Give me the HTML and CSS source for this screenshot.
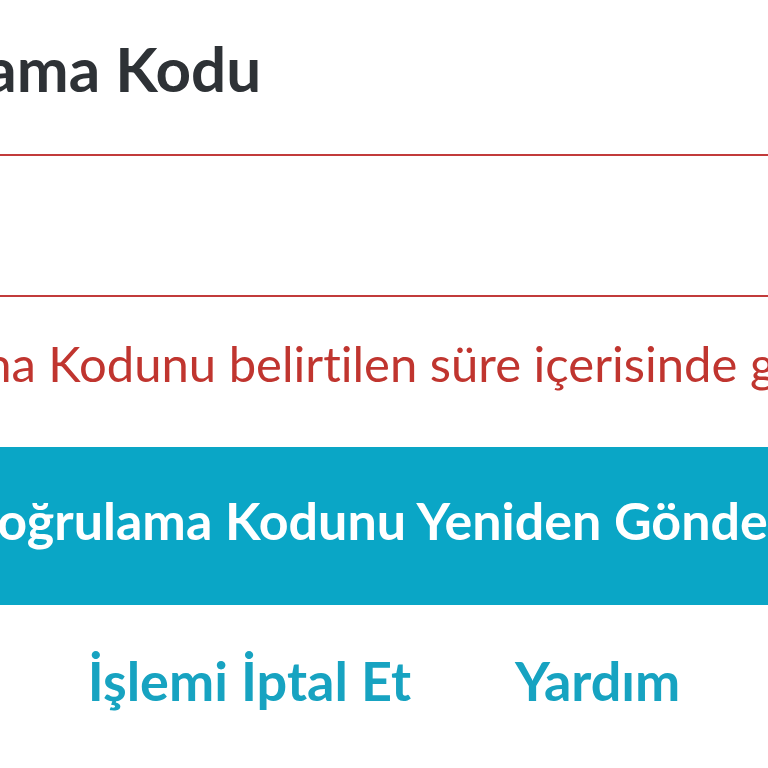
FILE: index.html
```html
<!DOCTYPE html>
<html lang="tr">
<head>
<meta charset="utf-8">
<link rel="stylesheet" href="styles.css">
</head>
<body>
<main class="screen">
  <h1 class="title">Doğrulama Kodu</h1>
  <div class="code-input"></div>
  <p class="error">Doğrulama Kodunu belirtilen süre içerisinde giriniz.</p>
  <button class="resend">Doğrulama Kodunu Yeniden Gönder</button>
  <nav class="links">
    <a class="link">İşlemi İptal Et</a>
    <a class="link">Yardım</a>
  </nav>
</main>
</body>
</html>
```
FILE: styles.css
```css
html, body {
  margin: 0;
  padding: 0;
  background: #ffffff;
  overflow: hidden;
  width: 768px;
  height: 768px;
}
.screen {
  width: 768px;
  font-family: Lato, "Open Sans", sans-serif;
  font-variant-ligatures: none;
}
.title {
  margin: 0 0 0 -203px;
  padding-top: 28px;
  font-size: 62px;
  font-weight: 700;
  line-height: 80px;
  color: #2e3236;
  white-space: nowrap;
}
.code-input {
  margin-top: 46px;
  height: 139px;
  border-top: 2px solid #c23b3b;
  border-bottom: 2px solid #c23b3b;
}
.error {
  margin: 31px 0 0 -200px;
  font-size: 49px;
  font-weight: 400;
  line-height: 70px;
  color: #c0352f;
  white-space: nowrap;
}
.resend {
  display: block;
  box-sizing: border-box;
  margin-top: 49px;
  width: 100%;
  height: 158px;
  border: 0;
  padding: 0 0 12px 0;
  background: #0aa6c6;
  color: #ffffff;
  font-family: inherit;
  font-variant-ligatures: none;
  font-size: 52px;
  font-weight: 700;
  line-height: 62px;
  text-align: left;
  white-space: nowrap;
  text-indent: -42px;
}
.links {
  display: flex;
  justify-content: center;
  gap: 104px;
  margin-top: 44px;
}
.link {
  font-size: 54px;
  font-weight: 700;
  line-height: 64px;
  color: #17a3c1;
  white-space: nowrap;
}
```
